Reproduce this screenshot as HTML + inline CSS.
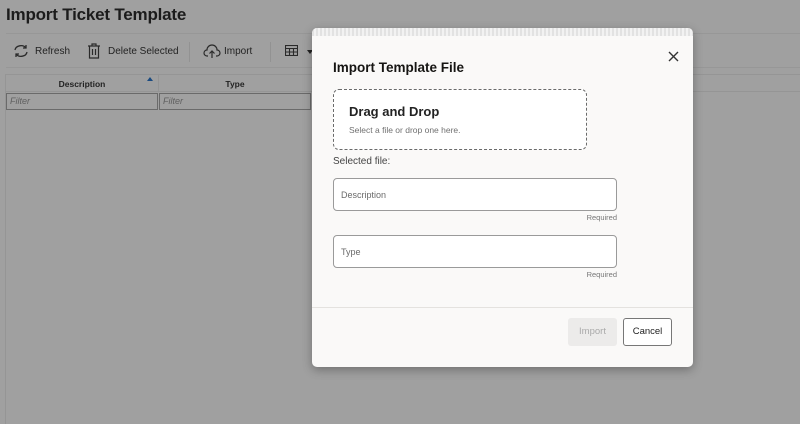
<!DOCTYPE html>
<html><head><meta charset="utf-8"><style>
*{box-sizing:border-box;margin:0;padding:0}
body{width:800px;height:424px;overflow:hidden;background:#a0a0a0;font-family:"Liberation Sans",sans-serif;color:#1a1a1a;position:relative}
.a{position:absolute}
.t{font-size:10px;color:#222}
</style></head><body>
<div class="a" style="left:6px;top:5px;font-size:17px;font-weight:bold;color:#1c1c1c;letter-spacing:-0.2px">Import Ticket Template</div>
<div class="a" style="left:6px;top:33px;width:794px;height:1px;background:#979797"></div>
<svg class="a" style="left:12px;top:43px" width="18" height="16" viewBox="0 0 18 16" fill="none" stroke="#2a2a2a" stroke-width="1.3"><path d="M3 7a6 5 0 0 1 11-2M14 2v3h-3M15 9a6 5 0 0 1-11 2M4 14v-3h3"/></svg>
<div class="a t" style="left:35px;top:46px">Refresh</div>
<svg class="a" style="left:87px;top:43px" width="14" height="16" viewBox="0 0 14 16" fill="none" stroke="#2a2a2a" stroke-width="1.2"><path d="M1 3h12M5 3V1h4v2M2.5 3v12h9V3M5.5 6v6M8.5 6v6"/></svg>
<div class="a t" style="left:108px;top:46px">Delete Selected</div>
<div class="a" style="left:189px;top:42px;width:1px;height:20px;background:#929292"></div>
<svg class="a" style="left:203px;top:44px" width="18" height="15" viewBox="0 0 18 15" fill="none" stroke="#2a2a2a" stroke-width="1.2"><path d="M5 12H4a3 3 0 0 1 0-6 5 5 0 0 1 10 0 3 3 0 0 1 0 6h-1M9 14V7M6.5 9.5 9 7l2.5 2.5"/></svg>
<div class="a t" style="left:224px;top:46px">Import</div>
<div class="a" style="left:270px;top:42px;width:1px;height:20px;background:#929292"></div>
<svg class="a" style="left:285px;top:45px" width="13" height="11" viewBox="0 0 13 11" fill="none" stroke="#2a2a2a" stroke-width="1.1"><rect x=".5" y=".5" width="12" height="10"/><path d="M.5 3.5h12M.5 7h12M4.5 3.5v7M8.5 3.5v7"/></svg>
<div class="a" style="left:307px;top:50px;border:3px solid transparent;border-top:4px solid #222"></div>
<div class="a" style="left:6px;top:67px;width:794px;height:1px;background:#979797"></div>
<div class="a" style="left:5px;top:74px;width:795px;height:350px;border-left:1px solid #959595;border-top:1px solid #959595"></div>
<div class="a" style="left:6px;top:75px;width:794px;height:17px;border-bottom:1px solid #959595"></div>
<div class="a" style="left:158px;top:75px;width:1px;height:17px;background:#959595"></div>
<div class="a" style="left:6px;top:79px;width:152px;text-align:center;font-size:8.5px;font-weight:bold;color:#222">Description</div>
<div class="a" style="left:147px;top:77px;border:3.5px solid transparent;border-bottom:4px solid #1a4a80;border-top:0"></div>
<div class="a" style="left:159px;top:79px;width:152px;text-align:center;font-size:8.5px;font-weight:bold;color:#222">Type</div>
<div class="a" style="left:6px;top:93px;width:152px;height:17px;border:1px solid #6a6a6a;font-size:9px;font-style:italic;color:#606060;padding:2px 3px">Filter</div>
<div class="a" style="left:159px;top:93px;width:152px;height:17px;border:1px solid #6a6a6a;font-size:9px;font-style:italic;color:#606060;padding:2px 3px">Filter</div>
<div class="a" style="left:312px;top:28px;width:381px;height:339px;background:#faf9f8;border-radius:5px;box-shadow:0 3px 10px rgba(0,0,0,.3);overflow:hidden">
  <div class="a" style="left:0;top:0;width:381px;height:8px;background:repeating-linear-gradient(90deg,#e2e2e2 0 2px,#f2f2f2 2px 4px)"></div>
  <div class="a" style="left:21px;top:32px;font-size:13.5px;font-weight:bold;color:#161513">Import Template File</div>
  <svg class="a" style="left:356px;top:23px" width="11" height="11" viewBox="0 0 11 11" stroke="#333" stroke-width="1.4"><path d="M1 1l9 9M10 1l-9 9"/></svg>
  <div class="a" style="left:21px;top:61px;width:254px;height:61px;background:#fff;border:1px dashed #6a6a6a;border-radius:6px"></div>
  <div class="a" style="left:37px;top:76px;font-size:13px;font-weight:bold;color:#222">Drag and Drop</div>
  <div class="a" style="left:37px;top:97px;font-size:8.5px;color:#707070">Select a file or drop one here.</div>
  <div class="a" style="left:21px;top:128px;font-size:10px;color:#444">Selected file:</div>
  <div class="a" style="left:21px;top:150px;width:284px;height:33px;background:#fff;border:1px solid #9a9a9a;border-radius:4px"></div>
  <div class="a" style="left:29px;top:162px;font-size:9px;color:#6a6a6a">Description</div>
  <div class="a" style="left:205px;top:185px;width:100px;text-align:right;font-size:7.5px;color:#777">Required</div>
  <div class="a" style="left:21px;top:207px;width:284px;height:33px;background:#fff;border:1px solid #9a9a9a;border-radius:4px"></div>
  <div class="a" style="left:29px;top:219px;font-size:9px;color:#6a6a6a">Type</div>
  <div class="a" style="left:205px;top:242px;width:100px;text-align:right;font-size:7.5px;color:#777">Required</div>
  <div class="a" style="left:0;top:279px;width:381px;height:1px;background:#e4e2df"></div>
  <div class="a" style="left:256px;top:290px;width:49px;height:28px;background:#ecebea;border-radius:3px;font-size:9.5px;color:#aaa;text-align:center;line-height:28px">Import</div>
  <div class="a" style="left:311px;top:290px;width:49px;height:28px;background:#fff;border:1px solid #777;border-radius:3px;font-size:9.5px;color:#222;text-align:center;line-height:26px">Cancel</div>
</div>
</body></html>
